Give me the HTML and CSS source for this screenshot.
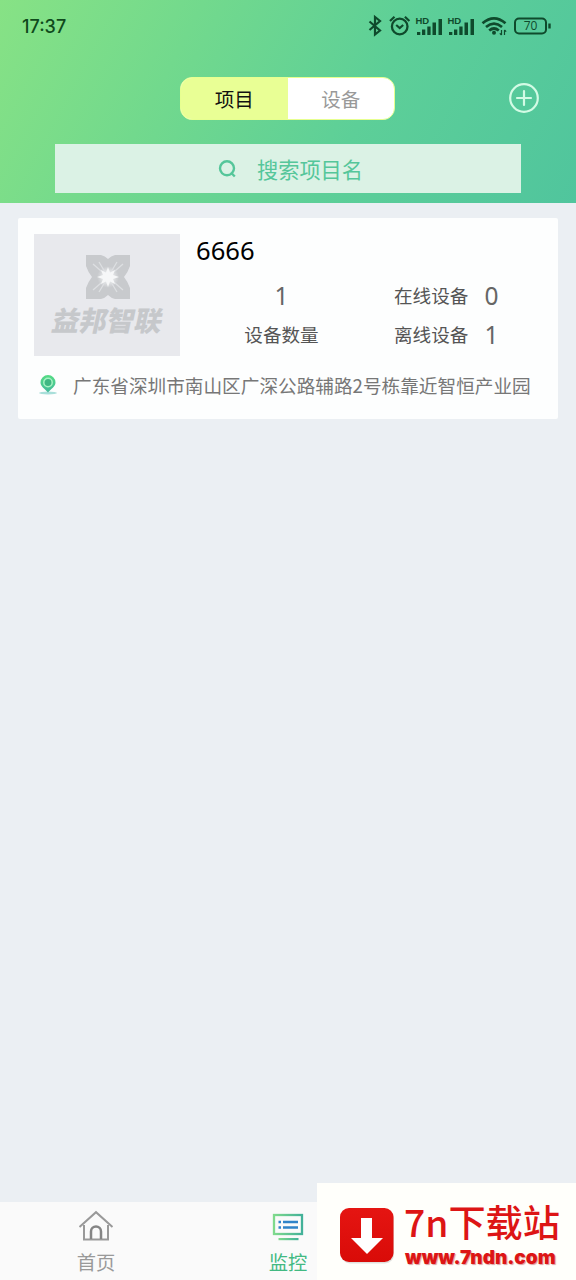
FILE: index.html
```html
<!DOCTYPE html>
<html lang="zh-CN">
<head>
<meta charset="utf-8">
<title>监控</title>
<link rel="stylesheet" href="styles.css">
</head>
<body>
<div class="app">
  <header class="header">
    <div class="status">
      <span class="clock">17:37</span>
      <svg class="status-icons" width="184" height="24" viewBox="0 0 184 24" fill="none" stroke="#0f4a2c" stroke-width="2">
        <path d="M1.500 7.500L12 16.500 7 20.500V3L12 7 1.500 16" stroke-width="2.200"/>
        <circle cx="31.700" cy="12.500" r="7.800" stroke-width="2.300"/>
        <path d="M22 7l4.500-4.200M41.400 7l-4.500-4.200M28.200 11l3.500 3 3.500-3" stroke-width="2.200"/>
        <g fill="#0f4a2c" stroke="none">
          <text class="hd" x="47.500" y="9.500">HD</text>
          <path d="M49 18h3.300v3H49zM54 15.500h3.300V21H54zM59.300 12.500h3.300V21h-3.300zM64.500 8.500H68V21h-3.500zM70.500 5H74v16h-3.500z"/>
          <text class="hd" x="79.500" y="9.500">HD</text>
          <path d="M81 18h3.300v3H81zM86 15.500h3.300V21H86zM91.300 12.500h3.300V21h-3.300zM96.500 8.500h3.500V21h-3.500zM102.500 5h3.500v16h-3.500z"/>
        </g>
        <path d="M114.500 9.300Q126 -.5 137.500 9.300M118 13Q126 6.300 134 13M121.200 16.500Q126 12.500 130.800 16.500" stroke-width="2.700"/>
        <circle cx="126" cy="18.800" r="2" fill="#0f4a2c" stroke="none"/>
        <path d="M133.500 16v5M136.500 21v-5M131.800 19.300l1.700 1.700M138.200 17.700l-1.700-1.700" stroke-width="1.200"/>
        <rect x="147" y="4.500" width="31" height="15" rx="4"/>
        <path d="M181.500 9.500v5" stroke-width="2.400"/>
        <text class="battery" x="162.500" y="16.300" text-anchor="middle">70</text>
      </svg>
    </div>
    <div class="toolbar">
      <div class="segment">
        <span class="segment-item segment-on">项目</span>
        <span class="segment-item">设备</span>
      </div>
      <svg class="add" width="32" height="32" viewBox="0 0 32 32" fill="none" stroke="#d3fbe5" stroke-width="2.200">
        <circle cx="16" cy="15" r="13.800"/>
        <path d="M16 8v14M9 15h14" stroke-linecap="round"/>
      </svg>
    </div>
    <div class="search">
      <svg width="18" height="18" viewBox="0 0 18 18" fill="none" stroke="#55c69a" stroke-width="2.400">
        <circle cx="9" cy="8.300" r="7"/>
        <path d="M12.800 12.500l4 4"/>
      </svg>
      <span>搜索项目名</span>
    </div>
  </header>

  <main class="content">
    <section class="card">
      <div class="summary">
        <div class="thumb">
          <svg width="46" height="46" viewBox="0 0 46 46">
            <defs>
              <radialGradient id="glow"><stop offset="0" stop-color="#fff"/><stop offset=".4" stop-color="#f4f5f6" stop-opacity=".8"/><stop offset="1" stop-color="#e8e9ec" stop-opacity="0"/></radialGradient>
            </defs>
            <path fill="#c8cacd" d="M1 1H16Q20 2 23 5Q26 2 30 1H45V12Q43 18 39 23Q43 28 45 34V45H30Q26 44 23 41Q20 44 16 45H1V34Q3 28 7 23Q3 18 1 12Z"/>
            <circle cx="23" cy="23" r="11" fill="url(#glow)"/>
            <path stroke="#dddfe2" stroke-width="1.300" d="M8 10L38 36M38 10L8 36M14 8L32 38M32 8L14 38"/>
            <path fill="#f6f7f8" d="M23 13l2 5.500L30 16l-2 5 6 2-6 2 2 5-5-2.500L23 33l-2-5.500L16 30l2-5-6-2 6-2-2-5 5 2.500Z"/>
          </svg>
          <span class="brand">益邦智联</span>
        </div>
        <div class="details">
          <h1 class="name">6666</h1>
          <div class="stats">
            <div class="total"><span class="num">1</span><span class="label">设备数量</span></div>
            <div class="states">
              <div class="state"><span class="label">在线设备</span><span class="num">0</span></div>
              <div class="state"><span class="label">离线设备</span><span class="num">1</span></div>
            </div>
          </div>
        </div>
      </div>
      <div class="address">
        <svg width="20" height="22" viewBox="0 0 20 22">
          <defs><linearGradient id="pin" x2="0" y2="1"><stop stop-color="#55dc84"/><stop offset="1" stop-color="#43b99c"/></linearGradient></defs>
          <ellipse cx="10" cy="20" rx="9" ry="1.500" fill="#a9dfda"/>
          <path d="M10 19.500C7 16 2.500 13.500 2.500 9.500a7.500 7.500 0 0 1 15 0C17.500 13.500 13 16 10 19.500Z" fill="url(#pin)"/>
          <circle cx="10" cy="9.500" r="4.200" fill="#3fb783" stroke="#a5f3c2" stroke-width="1.500"/>
        </svg>
        <span>广东省深圳市南山区广深公路辅路2号栋靠近智恒产业园</span>
      </div>
    </section>
  </main>

  <nav class="tabbar">
    <div class="tab">
      <svg width="36" height="32" viewBox="0 0 36 32" fill="none" stroke="#999" stroke-width="2">
        <path d="M1.500 17L18 2.200 34.500 17M6 15v14.500h24V15"/>
        <path d="M13 29V21.500a5 5 0 0 1 10 0V29" stroke="#858585" stroke-width="2.500"/>
      </svg>
      <span>首页</span>
    </div>
    <div class="tab tab-on">
      <svg width="32" height="32" viewBox="0 0 32 32" fill="none">
        <defs><linearGradient id="screen"><stop stop-color="#7fda8c"/><stop offset="1" stop-color="#42b199"/></linearGradient></defs>
        <rect x="2" y="5" width="28" height="19" stroke="url(#screen)" stroke-width="2.300"/>
        <path d="M6.500 28h20v2.200h-20z" fill="url(#screen)"/>
        <path d="M6.500 12h2.500M11 12h15M6.500 17.600h2.500M11 17.600h15" stroke="#2f83c9" stroke-width="2.500"/>
      </svg>
      <span>监控</span>
    </div>
    <div class="tab"></div>
  </nav>

  <aside class="download">
    <svg width="56" height="58" viewBox="0 0 56 58">
      <defs><linearGradient id="red" x2="0" y2="1"><stop stop-color="#e51512"/><stop offset="1" stop-color="#d90b08"/></linearGradient></defs>
      <rect x="2" y="2.500" width="53" height="54" rx="9" fill="#999" opacity=".3"/>
      <rect x="1" y="1" width="53.500" height="54" rx="9" fill="url(#red)"/>
      <path d="M22 11h11v20h11L28 47 12 31h10z" fill="#fff"/>
    </svg>
    <div class="download-text">
      <span class="download-name">7n下载站</span>
      <span class="download-url">www.7ndn.com</span>
    </div>
  </aside>
</div>
</body>
</html>
```
FILE: styles.css
```css
* { box-sizing: border-box; }
body {
  margin: 0;
  font-family: "Noto Sans CJK SC", "Noto Sans", sans-serif;
}
svg { display: block; flex: none; }
.app {
  position: relative;
  display: flex;
  flex-direction: column;
  width: 576px;
  height: 1280px;
  overflow: hidden;
  background: #ebeff3;
}
.header {
  height: 203px;
  background: linear-gradient(118deg, #87e285 0%, #72d98d 30%, #5dcf98 62%, #50c59d 100%);
}
.status {
  display: flex;
  justify-content: space-between;
  align-items: center;
  height: 52px;
  padding: 0 24px 0 22px;
}
.clock {
  padding-top: 2px;
  font: 500 18px/24px Inter, "Noto Sans", sans-serif;
  color: #0f4a1c;
}
.hd { font: 700 9.5px "Liberation Sans", sans-serif; }
.battery { font: 400 12px "Open Sans", sans-serif; fill: #0f4a2c; stroke: none; }
.toolbar {
  display: grid;
  grid-template-columns: 180px 215px 1fr;
  align-items: center;
  height: 43px;
  margin-top: 25px;
}
.segment {
  grid-column: 2;
  display: flex;
  height: 43px;
  overflow: hidden;
  border: 1.5px solid #e7ff90;
  border-radius: 12px;
  background: #fff;
}
.segment-item {
  flex: 1;
  text-align: center;
  font-size: 19.5px;
  line-height: 41px;
  color: #999;
}
.segment-on { background: #e9ff95; color: #111; }
.add { margin-left: 113px; }
.search {
  display: flex;
  align-items: center;
  width: 466px;
  height: 49px;
  margin: 24px 0 0 55px;
  padding-left: 163px;
  gap: 21px;
  background: #dbf2e5;
  color: #55c69a;
  font-size: 21.2px;
}
.content { flex: 1; padding: 15px 18px; }
.card {
  width: 540px;
  height: 201px;
  padding: 16px;
  border-radius: 2px;
  background: #fdfefe;
}
.summary { display: flex; gap: 16px; }
.thumb {
  display: flex;
  flex-direction: column;
  align-items: center;
  width: 146px;
  height: 122px;
  padding: 20px 0 0 2px;
  background: #e8e9ed;
}
.brand {
  margin-top: 3px;
  font-size: 27.5px;
  font-weight: 900;
  line-height: 32px;
  color: #c6c8cb;
  transform: skewX(-12deg);
}
.details { flex: 1; }
.name {
  margin: 0;
  font-family: "Noto Sans", sans-serif;
  font-size: 25.6px;
  font-weight: 400;
  line-height: 34px;
  color: #000;
}
.stats { display: flex; padding-top: 8px; }
.total {
  display: flex;
  flex-direction: column;
  align-items: center;
  width: 171px;
}
.states { padding-left: 27px; }
.state { display: flex; gap: 16px; }
.label, .num { height: 39px; line-height: 38px; }
.label { font-size: 18.6px; color: #555; }
.num { font-family: "Noto Sans", sans-serif; font-size: 24.5px; line-height: 40px; color: #666; }
.address {
  display: flex;
  align-items: center;
  gap: 15px;
  height: 28px;
  margin-top: 14px;
  padding-left: 4px;
  font-size: 18.65px;
  white-space: nowrap;
  color: #777;
}
.tabbar {
  display: flex;
  height: 78px;
  background: #fafafa;
}
.tab {
  display: flex;
  flex-direction: column;
  align-items: center;
  width: 192px;
  padding-top: 8px;
  font-size: 19.3px;
  line-height: 28px;
  color: #999;
}
.tab span { margin-top: 6px; }
.tab-on { color: #42b982; }
.download {
  position: absolute;
  right: 0;
  bottom: 0;
  display: flex;
  gap: 9px;
  width: 259px;
  height: 97px;
  padding: 24px 0 0 22px;
  background: #fffffb;
  color: #dd1515;
}
.download-text {
  display: flex;
  flex-direction: column;
  margin-top: -7px;
  white-space: nowrap;
}
.download-name {
  font-size: 37.2px;
  font-weight: 500;
  line-height: 42px;
}
.download-url {
  padding: 4px 0 0 1px;
  font: 900 19px/24px Inter, sans-serif;
  text-shadow: 1px 1px 1px #d9a0a0;
}
```
